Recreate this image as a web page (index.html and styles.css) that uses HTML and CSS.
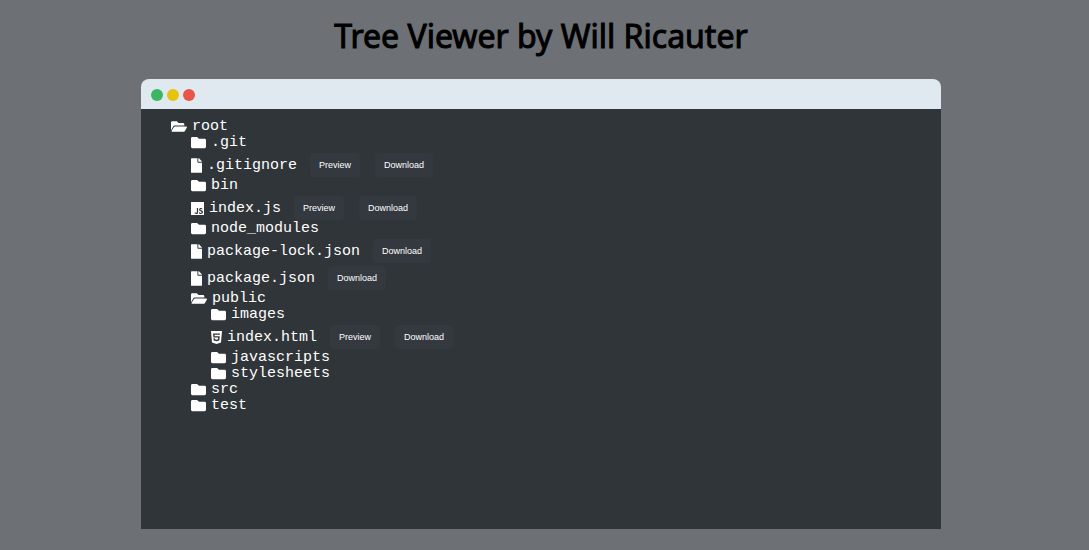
FILE: index.html
```html
<!DOCTYPE html>
<html lang="en">
<head>
<meta charset="utf-8">
<title>Tree Viewer</title>
<link rel="stylesheet" href="styles.css">
</head>
<body>
<svg class="sprite" aria-hidden="true">
  <symbol id="open" viewBox="0 0 576 512"><path d="M572.694 292.093L500.27 416.248A63.997 63.997 0 0 1 444.989 448H45.025c-18.523 0-30.064-20.093-20.731-36.093l72.424-124.155A64 64 0 0 1 152 256h399.964c18.523 0 30.064 20.093 20.73 36.093zM152 224h328v-48c0-26.51-21.49-48-48-48H272l-64-64H48C21.49 64 0 85.49 0 112v278.046l69.077-118.418C86.214 242.25 117.989 224 152 224z"/></symbol>
  <symbol id="folder" viewBox="0 0 512 512"><path d="M464 128H272l-64-64H48C21.49 64 0 85.49 0 112v288c0 26.51 21.49 48 48 48h416c26.51 0 48-21.49 48-48V176c0-26.51-21.49-48-48-48z"/></symbol>
  <symbol id="file" viewBox="0 0 384 512"><path d="M224 136V0H24C10.7 0 0 10.7 0 24v464c0 13.3 10.7 24 24 24h336c13.3 0 24-10.700 24-24V160H248c-13.200 0-24-10.800-24-24zm160-14.100v6.100H256V0h6.100c6.400 0 12.500 2.500 17 7l97.900 98c4.500 4.500 7 10.600 7 16.900z"/></symbol>
  <symbol id="js" viewBox="0 0 448 512"><path d="M0 32v448h448V32H0zm243.800 349.400c0 43.600-25.600 63.500-62.900 63.500-33.700 0-53.200-17.400-63.200-38.500l34.300-20.700c6.600 11.700 12.600 21.600 27.100 21.600 13.800 0 22.600-5.400 22.600-26.500V237.700h42.100v143.700zm99.600 63.500c-39.100 0-64.400-18.600-76.700-43l34.300-19.800c9 14.700 20.800 25.600 41.500 25.600 17.400 0 28.600-8.700 28.600-20.800 0-14.400-11.400-19.500-30.700-28l-10.500-4.500c-30.400-12.900-50.500-29.200-50.500-63.500 0-31.600 24.100-55.600 61.600-55.600 26.800 0 46 9.300 59.800 33.700L368 290c-7.200-12.900-15-18-27.100-18-12.300 0-20.100 7.800-20.100 18 0 12.600 7.800 17.700 25.900 25.600l10.500 4.500c35.800 15.300 55.900 31 55.900 66.200 0 37.800-29.800 58.600-69.700 58.600z"/></symbol>
  <symbol id="html5" viewBox="0 0 384 512"><path d="M0 32l34.900 395.800L191.500 480l157.600-52.200L384 32H0zm308.200 127.900H124.400l4.100 49.400h175.600l-13.600 148.400-97.900 27v.3h-1.100l-98.700-27.300-6-75.800h47.700L138 320l53.500 14.500 53.700-14.500 6-62.200H84.300L71.500 112.200h241.100l-4.400 47.700z"/></symbol>
</svg>
<main class="page">
  <h1 class="title">Tree Viewer by Will Ricauter</h1>
  <section class="window">
    <div class="bar"><span class="dot green"></span><span class="dot yellow"></span><span class="dot red"></span></div>
    <div class="screen">
      <ul class="tree">
        <li>
          <div class="row"><svg class="icon wide"><use href="#open"/></svg><span>root</span></div>
          <ul class="branch">
            <li class="row"><svg class="icon"><use href="#folder"/></svg><span>.git</span></li>
            <li class="row file"><svg class="icon narrow"><use href="#file"/></svg><span>.gitignore</span><button class="action">Preview</button><button class="action">Download</button></li>
            <li class="row"><svg class="icon"><use href="#folder"/></svg><span>bin</span></li>
            <li class="row file"><svg class="icon script"><use href="#js"/></svg><span>index.js</span><button class="action">Preview</button><button class="action">Download</button></li>
            <li class="row"><svg class="icon"><use href="#folder"/></svg><span>node_modules</span></li>
            <li class="row file"><svg class="icon narrow"><use href="#file"/></svg><span>package-lock.json</span><button class="action">Download</button></li>
            <li class="row file"><svg class="icon narrow"><use href="#file"/></svg><span>package.json</span><button class="action">Download</button></li>
            <li>
              <div class="row"><svg class="icon wide"><use href="#open"/></svg><span>public</span></div>
              <ul class="branch">
                <li class="row"><svg class="icon"><use href="#folder"/></svg><span>images</span></li>
                <li class="row file"><svg class="icon narrow"><use href="#html5"/></svg><span>index.html</span><button class="action">Preview</button><button class="action">Download</button></li>
                <li class="row"><svg class="icon"><use href="#folder"/></svg><span>javascripts</span></li>
                <li class="row"><svg class="icon"><use href="#folder"/></svg><span>stylesheets</span></li>
              </ul>
            </li>
            <li class="row"><svg class="icon"><use href="#folder"/></svg><span>src</span></li>
            <li class="row"><svg class="icon"><use href="#folder"/></svg><span>test</span></li>
          </ul>
        </li>
      </ul>
    </div>
  </section>
</main>
</body>
</html>
```
FILE: styles.css
```css
* { box-sizing: border-box; }
body {
  margin: 0;
  background: #6d7175;
  font-family: "Noto Sans", sans-serif;
}
.sprite { display: none; }
.page { padding: 12px 15px 20px 8px; }
.title {
  margin: 0 0 19px;
  font-size: 32px;
  line-height: 48px;
  font-weight: 400;
  -webkit-text-stroke: 1px #000;
  text-align: center;
  color: #000;
}
.window { max-width: 800px; margin: 0 auto; }
.bar {
  display: flex;
  align-items: center;
  gap: 4px;
  height: 30px;
  padding: 2px 10px 0;
  background: #e0e8f0;
  border-radius: 8px 8px 0 0;
}
.dot { width: 12px; height: 12px; border-radius: 50%; }
.green { background: #3bb662; }
.yellow { background: #e5c30f; }
.red { background: #e75448; }
.screen {
  min-height: 420px;
  padding: 9px 30px;
  background: #303539;
  color: #fff;
  font-family: "Liberation Mono", monospace;
  font-size: 15px;
}
.tree, .branch { margin: 0; padding: 0; list-style: none; }
.branch { padding-left: 20px; }
.row { display: flex; align-items: center; height: 16px; }
.file { height: 27px; padding-top: 3px; }
.icon { width: 15px; height: 15px; margin: 1px 5px 0 0; fill: currentColor; flex: none; }
.wide { width: 16px; }
.narrow { width: 11px; }
.script { width: 13px; }
.action {
  height: 24px;
  margin-left: 15px;
  padding: 0 9px 1px;
  border: 0;
  border-radius: 4px;
  background: #343940;
  color: #fff;
  font-family: "Liberation Sans", Arial, sans-serif;
  font-size: 9px;
}
span + .action { margin-left: 13px; }
```
